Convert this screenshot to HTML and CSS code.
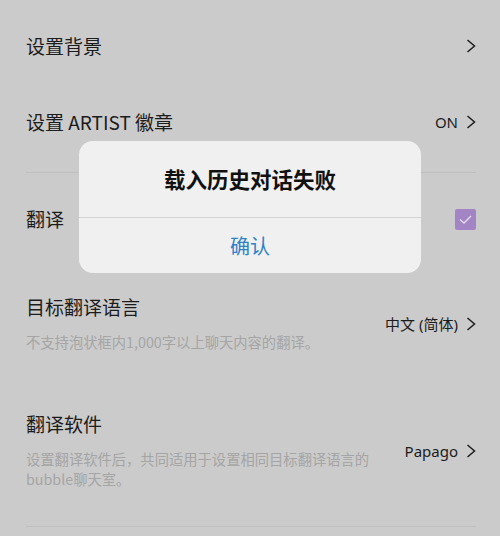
FILE: index.html
```html
<!DOCTYPE html>
<html lang="zh-CN">
<head>
  <meta charset="UTF-8"/>
  <meta name="viewport" content="width=device-width,initial-scale=1"/>
  <title>聊天室设置</title>
  <link rel="stylesheet" href="styles.css">
</head>
<body>

  <div class="settings">
    <!-- top group -->
    <div class="group first">
      <div class="row tall">
        <span class="title">设置背景</span>
        <span class="value"><svg class="chev" viewBox="0 0 10 14"><path d="M1.5 1 L8.5 7 L1.5 13"/></svg></span>
      </div>
      <div class="row tall">
        <span class="title">设置 ARTIST 徽章</span>
        <span class="value">ON<svg class="chev" viewBox="0 0 10 14"><path d="M1.5 1 L8.5 7 L1.5 13"/></svg></span>
      </div>
    </div>

    <!-- translation group -->
    <div class="group">
      <div class="row check-row">
        <span class="title">翻译</span>
        <span class="checkbox"><svg viewBox="0 0 21 21"><path d="M5 10.5 L9 14 L16 7"/></svg></span>
      </div>
      <div class="row sub-row">
        <div class="text">
          <div class="title">目标翻译语言</div>
          <div class="desc">不支持泡状框内1,000字以上聊天内容的翻译。</div>
        </div>
        <span class="value">中文 (简体)<svg class="chev" viewBox="0 0 10 14"><path d="M1.5 1 L8.5 7 L1.5 13"/></svg></span>
      </div>
      <div class="row sub-row last">
        <div class="text">
          <div class="title">翻译软件</div>
          <div class="desc">设置翻译软件后，共同适用于设置相同目标翻译语言的bubble聊天室。</div>
        </div>
        <span class="value">Papago<svg class="chev" viewBox="0 0 10 14"><path d="M1.5 1 L8.5 7 L1.5 13"/></svg></span>
      </div>
    </div>
  </div>

  <!-- alert -->
  <div class="alert">
    <div class="alert-msg">载入历史对话失败</div>
    <div class="alert-btn">确认</div>
  </div>

</body>
</html>
```

FILE: styles.css
```css
body{margin:0;background:#cbcbcb;color:#1c1c1c;
     font-family:"Noto Sans CJK SC","Noto Sans",sans-serif;width:500px;height:536px;overflow:hidden;position:relative}
.settings{padding:0 24px 0 26px}
.group{border-bottom:1px solid #c0c0c0}
.group.first{padding:8px 0 12px}
.row{display:flex;align-items:center;justify-content:space-between}
.row.tall{height:76px}
.title{font-size:19px;line-height:24px}
.value{display:flex;align-items:center;font-size:15px;font-family:"Noto Sans","Noto Sans CJK SC",sans-serif;
       color:#1c1c1c;white-space:nowrap}
.chev{width:10px;height:14px;margin-left:8px;fill:none;stroke:#1c1c1c;stroke-width:1.5}
.row.check-row{height:92px}
.checkbox{width:21px;height:21px;background:#a385c5;border-radius:2px;display:flex}
.checkbox svg{width:21px;height:21px;fill:none;stroke:#e6dcef;stroke-width:1.4}
.row.sub-row{padding:30px 0}
.row.sub-row.last{padding-bottom:37px}
.text{max-width:350px}
.desc{margin-top:13px;font-size:14.3px;line-height:20px;color:#a5a5a5}

.alert{position:absolute;left:79px;top:141px;width:342px;background:#f0f0f0;border-radius:14px;
       overflow:hidden;text-align:center}
.alert-msg{height:76px;line-height:76px;font-size:21.5px;font-weight:bold;color:#111;
           border-bottom:1px solid #d3d3d3}
.alert-btn{height:55px;line-height:55px;font-size:20px;color:#2f80c4}
```
